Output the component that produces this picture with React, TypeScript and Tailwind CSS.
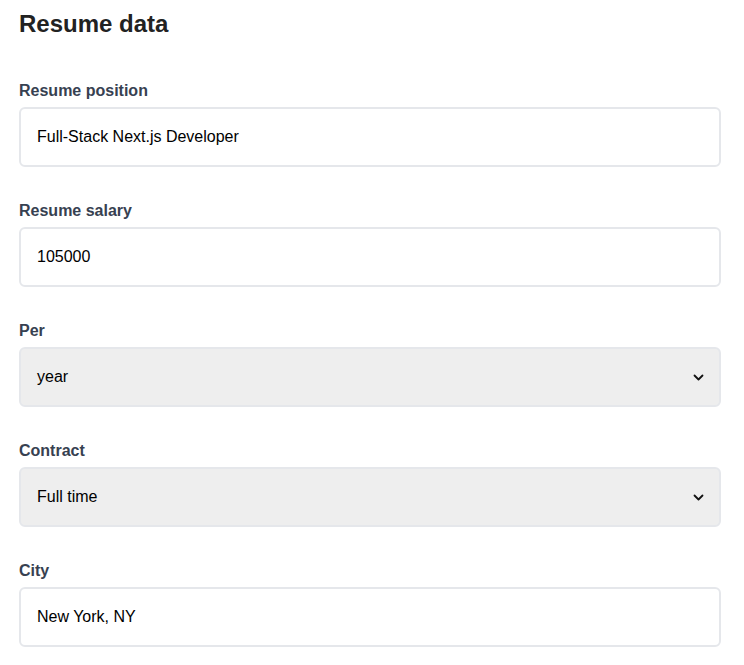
import React from "react";

const Chevron = () => (
  <svg width="11" height="7" viewBox="0 0 11 7" fill="none" stroke="#111" strokeWidth="1.8" strokeLinecap="round" strokeLinejoin="round">
    <path d="M1.5 1.5L5.5 5.5L9.5 1.5" />
  </svg>
);

function Field({ label, value, select }: { label: string; value: string; select?: boolean }) {
  return (
    <div className="flex flex-col">
      <label className="text-base font-bold text-[#374151] leading-6 mb-[4px]">{label}</label>
      <div
        className={`h-[60px] w-[702px] rounded-md border-2 border-[#e5e7eb] flex items-center justify-between pl-[16px] pr-[15px] text-base text-black ${select ? "bg-[#eeeeee]" : "bg-white"}`}
      >
        <span>{value}</span>
        {select && <Chevron />}
      </div>
    </div>
  );
}

export default function App() {
  return (
    <div className="min-h-[665px] bg-white px-[19px] pt-[8px]" style={{ fontFamily: '"Liberation Sans", Arial, sans-serif' }}>
      <h1 className="text-2xl font-bold text-[#222] leading-8 mb-[39px]">Resume data</h1>
      <div className="flex flex-col gap-[32px]">
        <Field label="Resume position" value="Full-Stack Next.js Developer" />
        <Field label="Resume salary" value="105000" />
        <Field label="Per" value="year" select />
        <Field label="Contract" value="Full time" select />
        <Field label="City" value="New York, NY" />
      </div>
    </div>
  );
}
